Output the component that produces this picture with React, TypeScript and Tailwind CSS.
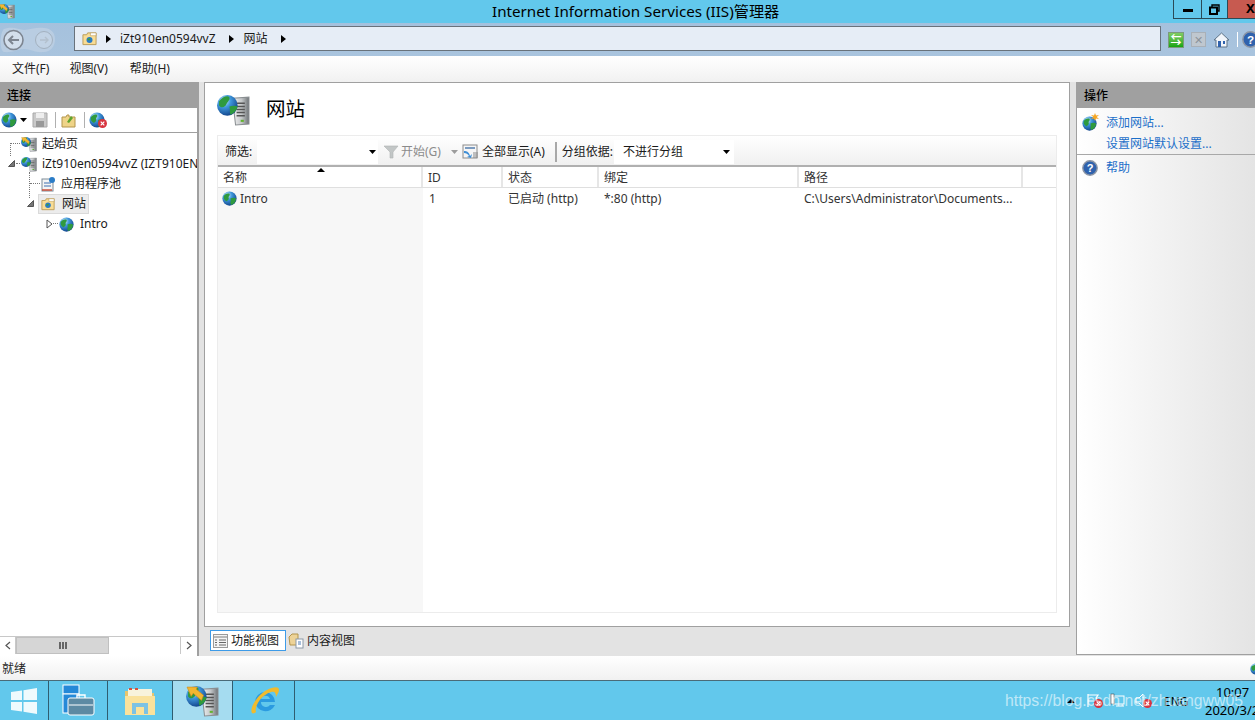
import type { ReactNode } from "react";

const uiFont = { fontFamily: "'Noto Sans', 'Noto Sans CJK SC', sans-serif" };

function Globe({ size = 16 }: { size?: number }) {
  return (
    <svg width={size} height={size} viewBox="0 0 16 16" className="shrink-0">
      <defs>
        <radialGradient id="sea" cx="35%" cy="28%" r="78%">
          <stop offset="0" stopColor="#d8f0fb" />
          <stop offset="0.4" stopColor="#3f97dc" />
          <stop offset="1" stopColor="#0f3f86" />
        </radialGradient>
      </defs>
      <circle cx="8" cy="8" r="7.6" fill="url(#sea)" />
      <path d="M2 5c2-2 4-3 6-2 1 2-1 2-1 4 1 2-1 3-2 4C3 10 1 8 2 5z" fill="#2f9a3e" />
      <path d="M9 8c2-1 4-1 6 0 0 3-2 6-5 7-2-2 0-4-1-7z" fill="#2f9a3e" />
    </svg>
  );
}

function ServerGlobe({ size = 16, badge }: { size?: number; badge?: boolean }) {
  return (
    <svg width={size} height={size} viewBox="0 0 32 32" className="shrink-0">
      <defs>
        <linearGradient id="srv" x1="0" x2="1" y1="0" y2="0">
          <stop offset="0" stopColor="#f4f4f4" />
          <stop offset="0.55" stopColor="#c4c7c9" />
          <stop offset="1" stopColor="#6f7477" />
        </linearGradient>
        <radialGradient id="sea2" cx="35%" cy="28%" r="78%">
          <stop offset="0" stopColor="#d8f0fb" />
          <stop offset="0.4" stopColor="#3f97dc" />
          <stop offset="1" stopColor="#0f3f86" />
        </radialGradient>
      </defs>
      <path d="M15 5l16-1v26l-13 1z" fill="url(#srv)" stroke="#8a8f92" />
      <path d="M19 10h8M19 13h8M19 16h8M19 19h8M19 22h8" stroke="#555" strokeWidth="1.4" />
      <rect x="23" y="26" width="3" height="2" fill="#62b32f" />
      <circle cx="10" cy="12" r="10" fill="url(#sea2)" />
      <path d="M2 8c3-4 8-6 10-4 1 3-2 4-3 7s-5 4-7 1z" fill="#2f9a3e" />
      <path d="M12 13c3-1 6-1 8 0-1 4-4 7-7 8-1-3 0-5-1-8z" fill="#2f9a3e" />
      {badge && <path d="M1 3h10l-1 2 7 6-2 5-8-7-2 3z" fill="#f2b632" stroke="#c98a1c" strokeWidth="0.6" />}
    </svg>
  );
}

function SitesFolder({ size = 16 }: { size?: number }) {
  return (
    <svg width={size} height={size} viewBox="0 0 16 16" className="shrink-0">
      <path d="M1 4h4l1-2h9v12.500H1z" fill="#f8dc95" stroke="#b99a55" />
      <path d="M9 2h6v3H9z" fill="#fff" stroke="#b99a55" strokeWidth="0.6" />
      <circle cx="8" cy="9.500" r="3.200" fill="#2a7cc7" />
      <path d="M6 8.500c1-1 3-1 3 0s-2 2-3 1z" fill="#3f9d3a" />
    </svg>
  );
}

function HelpIcon({ size = 16 }: { size?: number }) {
  return (
    <svg width={size} height={size} viewBox="0 0 16 16" className="shrink-0">
      <circle cx="8" cy="8" r="7.200" fill="#2f62ad" stroke="#8d96a5" strokeWidth="1.400" />
      <text x="8" y="12" textAnchor="middle" fontSize="11" fontWeight="700" fill="#fff" fontFamily="'Liberation Sans', sans-serif">
        ?
      </text>
    </svg>
  );
}

function Filter() {
  return (
    <svg width="16" height="14" viewBox="0 0 16 14" className="shrink-0">
      <path d="M1 1h14L10 7v6H7V7z" fill="#c2c6c6" stroke="#b0b4b4" strokeWidth="0.6" />
    </svg>
  );
}

function RedX({ size = 9 }: { size?: number }) {
  return (
    <svg width={size} height={size} viewBox="0 0 10 10" className="absolute -right-0.5 bottom-0">
      <circle cx="5" cy="5" r="5" fill="#d8343f" />
      <path d="M3 3l4 4M7 3l-4 4" stroke="#fff" strokeWidth="1.300" />
    </svg>
  );
}

function Caret({ grey }: { grey?: boolean }) {
  return (
    <svg width="7" height="4" viewBox="0 0 7 4" className="shrink-0">
      <path d="M0 0h7L3.500 4z" fill={grey ? "#9c9c9c" : "#000"} />
    </svg>
  );
}

function Crumb() {
  return (
    <svg width="5" height="8" viewBox="0 0 5 8" className="shrink-0">
      <path d="M0 0l5 4-5 4z" fill="#000" />
    </svg>
  );
}

function Expanded() {
  return (
    <svg width="7" height="7" viewBox="0 0 7 7">
      <path d="M6.500 0.500v6h-6z" fill="#777" stroke="#555" />
    </svg>
  );
}

function PanelHeader({ children }: { children: ReactNode }) {
  return <div className="h-[26px] shrink-0 bg-[#a0a0a0] flex items-center pl-[7px] pr-2 pt-[2px] text-[12px] font-medium text-black">{children}</div>;
}

function TaskButton({ children, active, width }: { children: ReactNode; active?: boolean; width: string }) {
  return (
    <div className={`${width} h-full flex items-center justify-center border-r border-[#2f5d70] ${active ? "bg-[#a5dcf0]" : ""}`}>
      {children}
    </div>
  );
}

const columns = [
  { label: "名称", cell: "w-[205px]" },
  { label: "ID", cell: "w-[80px]" },
  { label: "状态", cell: "w-[96px]" },
  { label: "绑定", cell: "w-[200px]" },
  { label: "路径", cell: "w-[224px]" },
];

export default function App() {
  return (
    <div className="w-[1255px] h-[720px] overflow-hidden relative flex flex-col bg-[#e3e3e3] text-[12px] text-[#1a1a1a]" style={uiFont}>
      {/* title bar */}
      <div className="h-[23px] shrink-0 bg-[#62c8ec] flex items-start relative">
        <div className="pt-[3px] -ml-[1px]">
          <ServerGlobe size={16} badge />
        </div>
        <div className="absolute left-[492px] top-[1px] text-[15.200px] leading-5 text-black whitespace-nowrap">Internet Information Services (IIS)管理器</div>
        <div className="ml-auto flex h-[19px]">
          <div className="w-[29px] border border-[#2b4a57] border-t-0 flex items-center justify-center">
            <span className="w-[10px] h-[3px] bg-black mt-[3px]" />
          </div>
          <div className="w-[26px] border-b border-r border-[#2b4a57] flex items-center justify-center">
            <svg width="11" height="11" viewBox="0 0 11 11">
              <path d="M3 3V1h7v6H8" fill="none" stroke="#000" strokeWidth="1.400" />
              <rect x="1" y="3.500" width="7" height="6.500" fill="none" stroke="#000" strokeWidth="2" />
            </svg>
          </div>
          <div className="w-[27px] bg-[#c75a50] border-b border-[#2b4a57] text-black text-[13px] font-bold leading-[17px] pl-[18px]">X</div>
        </div>
      </div>

      {/* address bar */}
      <div className="h-[33px] shrink-0 bg-gradient-to-b from-[#a5c1dd] to-[#a9c4de] flex items-center">
        <div className="w-[74px] shrink-0 flex items-center">
          <svg width="58" height="28" viewBox="0 0 58 28">
            <path d="M4 3c8-3 14 0 20 1 6 0 12-3 20-2 6 0 11 4 11 11 0 8-5 13-11 13-8 1-14-3-20-3-6 0-12 4-20 3C-1 25 0 6 4 3z" fill="#b9cde2" />
            <circle cx="13.500" cy="14" r="9.500" fill="#d3dfec" stroke="#7d8590" strokeWidth="1.600" />
            <path d="M19 14H9M13 10l-4 4 4 4" fill="none" stroke="#7d8590" strokeWidth="2" />
            <circle cx="44" cy="14" r="8.500" fill="#c2d3e5" stroke="#a3b1bf" />
            <path d="M40 14h8M45 11l3 3-3 3" fill="none" stroke="#b3c0cd" strokeWidth="1.400" />
          </svg>
        </div>
        <div className="w-[1087px] shrink-0 h-[25px] -mt-[2px] bg-[#e6edf6] border border-[#68727c] flex items-center pl-[7px] text-[12px] text-[#1a1a1a]">
          <SitesFolder size={15} />
          <span className="ml-[9px]">
            <Crumb />
          </span>
          <span className="ml-[9px]">iZt910en0594vvZ</span>
          <span className="ml-[13px]">
            <Crumb />
          </span>
          <span className="ml-[10px]">网站</span>
          <span className="ml-[13px]">
            <Crumb />
          </span>
        </div>
        <div className="flex items-center ml-[7px] gap-[7px] shrink-0">
          <div className="w-[16px] h-[16px] bg-gradient-to-b from-[#7dcd62] to-[#0da50f] border border-[#7c9a7c] flex items-center justify-center text-white text-[11px] leading-none font-bold">⇆</div>
          <div className="w-[15px] h-[15px] bg-[#bfc7cf] border border-[#a8b0b8] flex items-center justify-center text-[#8b939b] text-[11px] leading-none">✕</div>
          <svg width="17" height="16" viewBox="0 0 17 16" className="shrink-0">
            <path d="M8.500 1L1 8h2v7h11V8h2z" fill="#f1f5fa" stroke="#5f7488" />
            <rect x="5" y="9" width="3" height="6" fill="#2f62ad" />
            <rect x="10" y="9" width="2" height="3" fill="#2f62ad" />
          </svg>
          <span className="w-px h-[15px] bg-white" />
          <div className="-ml-[3px]">
            <HelpIcon size={17} />
          </div>
        </div>
      </div>

      {/* menu */}
      <div className="h-[26px] shrink-0 bg-gradient-to-b from-white to-[#f1f1f1] flex items-center pl-[12px] text-[12px] text-[#222]">
        <span>文件(F)</span>
        <span className="ml-[20px]">视图(V)</span>
        <span className="ml-[22px]">帮助(H)</span>
      </div>

      {/* panes */}
      <div className="flex-1 min-h-0 flex bg-[#e3e3e3]">
        {/* connections */}
        <div className="w-[199px] shrink-0 h-full pb-[2px] flex flex-col bg-white border-r-2 border-[#a0a0a0]">
          <PanelHeader>连接</PanelHeader>
          <div className="h-[25px] shrink-0 border-b border-[#a0a0a0] flex items-center pl-[1px]">
            <Globe size={16} />
            <span className="ml-[3px]">
              <Caret />
            </span>
            <svg width="16" height="16" viewBox="0 0 16 16" className="ml-[5px] shrink-0">
              <path d="M1 1h14v14H1z" fill="#c9c9c9" stroke="#a9a9a9" />
              <rect x="4" y="1" width="8" height="5" fill="#eee" />
              <rect x="4" y="9" width="8" height="6" fill="#999" />
            </svg>
            <span className="w-px h-[16px] bg-[#b0b0b0] ml-[7px]" />
            <svg width="15" height="15" viewBox="0 0 15 15" className="ml-[5px] shrink-0">
              <path d="M1 4h4l1-2h2v2h6v10H1z" fill="#efd488" stroke="#b3954d" />
              <path d="M6 9l4-6 2 2-4 5z" fill="#5ea52e" />
            </svg>
            <span className="w-px h-[16px] bg-[#b0b0b0] ml-[8px]" />
            <div className="relative ml-[4px]">
              <Globe size={16} />
              <RedX size={9} />
            </div>
          </div>
          <div className="flex-1 min-h-0 relative overflow-hidden text-[12px]">
            <div className="flex flex-col pt-[1px]">
              <div className="h-[20px] flex items-center pl-[21px] gap-[5px] whitespace-nowrap">
                <ServerGlobe size={16} badge />
                <span>起始页</span>
              </div>
              <div className="h-[20px] flex items-center pl-[21px] gap-[5px] whitespace-nowrap">
                <ServerGlobe size={16} />
                <span>iZt910en0594vvZ (IZT910EN0594VVZ\Administrator)</span>
              </div>
              <div className="h-[20px] flex items-center pl-[40px] gap-[5px] whitespace-nowrap">
                <svg width="16" height="16" viewBox="0 0 16 16" className="shrink-0">
                  <rect x="2" y="3" width="11" height="12" fill="#f4f4f4" stroke="#7d8b98" />
                  <path d="M4 7h7M4 10h7" stroke="#3d6fb0" />
                  <circle cx="12" cy="4" r="3" fill="#2a7cc7" />
                  <path d="M2 14h10" stroke="#c8442f" strokeWidth="1.400" />
                </svg>
                <span>应用程序池</span>
              </div>
              <div className="h-[20px] flex items-center pl-[38px] whitespace-nowrap">
                <div className="h-[20px] w-[51px] bg-[#ececec] border border-[#dadada] flex items-center pl-[2px] gap-[7px]">
                  <SitesFolder size={14} />
                  <span>网站</span>
                </div>
              </div>
              <div className="h-[20px] flex items-center pl-[59px] gap-[6px] whitespace-nowrap">
                <Globe size={15} />
                <span>Intro</span>
              </div>
            </div>
            {/* tree connectors and expanders */}
            <span className="absolute left-[10px] top-[10px] w-[10px] border-t border-dotted border-[#777]" />
            <span className="absolute left-[10px] top-[10px] h-[13px] border-l border-dotted border-[#777]" />
            <span className="absolute left-[8px] top-[27px]">
              <Expanded />
            </span>
            <span className="absolute left-[16px] top-[30px] w-[4px] border-t border-dotted border-[#777]" />
            <span className="absolute left-[29px] top-[39px] h-[26px] border-l border-dotted border-[#777]" />
            <span className="absolute left-[30px] top-[50px] w-[10px] border-t border-dotted border-[#777]" />
            <span className="absolute left-[27px] top-[67px]">
              <Expanded />
            </span>
            <span className="absolute left-[46px] top-[86px]">
              <svg width="7" height="10" viewBox="0 0 7 10">
                <path d="M1 1l5 4-5 4z" fill="#fff" stroke="#555" />
              </svg>
            </span>
            <span className="absolute left-[53px] top-[90px] w-[5px] border-t border-dotted border-[#777]" />
          </div>
          <div className="h-[18px] shrink-0 flex border-t border-[#c8c8c8] bg-white">
            <div className="w-[16px] flex items-center justify-center text-[#555] border-r border-[#c8c8c8]">
              <svg width="6" height="9" viewBox="0 0 6 9">
                <path d="M5 1L1 4.500 5 8" fill="none" stroke="#555" strokeWidth="1.200" />
              </svg>
            </div>
            <div className="w-[93px] bg-[#d6d6d6] border border-[#c0c0c0] flex items-center justify-center gap-[1px]">
              <span className="w-[2px] h-[7px] bg-[#666]" />
              <span className="w-[2px] h-[7px] bg-[#666]" />
              <span className="w-[2px] h-[7px] bg-[#666]" />
            </div>
            <div className="flex-1 border-r border-[#c8c8c8]" />
            <div className="w-[16px] flex items-center justify-center">
              <svg width="6" height="9" viewBox="0 0 6 9">
                <path d="M1 1l4 3.500L1 8" fill="none" stroke="#555" strokeWidth="1.200" />
              </svg>
            </div>
          </div>
        </div>

        {/* center */}
        <div className="flex-1 min-w-0 flex flex-col pl-[5px] pr-[6px]">
          <div className="h-[545px] shrink-0 bg-white border border-[#a0a0a0] pl-[12px] pr-[12px] flex flex-col">
            <div className="h-[52px] shrink-0 flex items-center gap-[16px]">
              <ServerGlobe size={33} />
              <span className="text-[19.500px] leading-none text-black">网站</span>
            </div>
            <div className="flex-1 min-h-0 mb-[13px] flex flex-col border border-[#ececec]">
              <div className="h-[31px] shrink-0 bg-gradient-to-b from-white to-[#f0f0f0] border-b-2 border-[#b0b0b0] flex items-center pl-[7px] pt-[2px]">
                <span className="w-[32px]">筛选:</span>
                <div className="w-[121px] h-[24px] bg-white flex items-center justify-end pr-[2px]">
                  <Caret />
                </div>
                <span className="ml-[5px]">
                  <Filter />
                </span>
                <span className="ml-[2px] text-[#8b8b8b]">开始(G)</span>
                <span className="ml-[10px]">
                  <Caret grey />
                </span>
                <svg width="18" height="16" viewBox="0 0 18 16" className="ml-[4px] shrink-0">
                  <rect x="1" y="1" width="14" height="13" fill="#f6f6f6" stroke="#8c8c8c" />
                  <path d="M3 4h10" stroke="#7b9bc0" strokeWidth="2" />
                  <path d="M2 7c3 0 5 1 6 5l2-2-1 4-4-1 2-1c-1-2-3-3-5-3z" fill="#3f8fd6" />
                  <path d="M11 9h5M11 11h5M11 13h5" stroke="#888" />
                </svg>
                <span className="ml-[2px]">全部显示(A)</span>
                <span className="w-[2px] h-[20px] bg-[#a8a8a8] ml-[10px]" />
                <span className="ml-[5px]">分组依据:</span>
                <div className="w-[120px] h-[24px] bg-white flex items-center pl-[9px] ml-[1px] pr-[4px] justify-between">
                  <span>不进行分组</span>
                  <Caret />
                </div>
              </div>
              <div className="h-[21px] shrink-0 flex border-b border-[#dfdfdf] bg-white relative">
                {columns.map((col) => (
                  <div key={col.label} className={`${col.cell} border-r-2 border-[#e6e6e6] flex items-center pl-[5px] pt-[1px] text-[#333]`}>
                    {col.label}
                  </div>
                ))}
                <span className="absolute left-[99px] top-[1px] w-0 h-0 border-x-[4px] border-x-transparent border-b-[4px] border-b-black" />
              </div>
              <div className="flex-1 min-h-0 flex">
                <div className="w-[205px] shrink-0 bg-[#f7f7f7]">
                  <div className="h-[21px] flex items-center pl-[4px] gap-[3px] text-[#333]">
                    <Globe size={15} />
                    <span>Intro</span>
                  </div>
                </div>
                <div className="flex-1 min-w-0 bg-white">
                  <div className="h-[21px] flex items-center text-[#333]">
                    <span className="w-[80px] pl-[6px]">1</span>
                    <span className="w-[96px] pl-[5px]">已启动 (http)</span>
                    <span className="w-[200px] pl-[5px]">*:80 (http)</span>
                    <span className="pl-[5px] whitespace-nowrap">C:\Users\Administrator\Documents...</span>
                  </div>
                </div>
              </div>
            </div>
          </div>
          <div className="h-[28px] shrink-0 flex items-center pl-[6px]">
            <div className="h-[21px] w-[76px] mt-[-1px] bg-white border border-[#3d9be8] flex items-center pl-[2px] gap-[3px]">
              <svg width="15" height="14" viewBox="0 0 15 14" className="shrink-0">
                <rect x="0.500" y="0.500" width="14" height="13" fill="#f4f4f4" stroke="#9a9a9a" />
                <path d="M1 3h13" stroke="#b8b8b8" strokeWidth="2" />
                <path d="M6 6h7M6 8.500h7M6 11h7M2 6h2M2 8.500h2M2 11h2" stroke="#666" />
              </svg>
              <span className="whitespace-nowrap">功能视图</span>
            </div>
            <div className="mt-[-1px] ml-[2px] flex items-center gap-[3px] whitespace-nowrap">
              <svg width="16" height="16" viewBox="0 0 16 16" className="shrink-0">
                <path d="M1 4l3-3h6v11H2z" fill="#edd398" stroke="#b3954d" />
                <rect x="8" y="6" width="7" height="9" fill="#fff" stroke="#8c9aa8" />
                <path d="M10 9h3M10 11h3" stroke="#4f7fb8" />
              </svg>
              <span>内容视图</span>
            </div>
          </div>
        </div>

        {/* actions */}
        <div className="w-[179px] shrink-0 h-full pb-[1px]">
          <div className="h-full bg-gradient-to-r from-white to-[#e4e4e4] border-l border-b border-[#a0a0a0] flex flex-col">
            <PanelHeader>操作</PanelHeader>
            <div className="flex flex-col text-[#1c6fc9]">
              <div className="h-[28px] flex items-center pl-[5px] gap-[9px] pt-[2px]">
                <div className="relative">
                  <Globe size={15} />
                  <svg width="8" height="8" viewBox="0 0 8 8" className="absolute -right-[2px] -top-[3px]">
                    <path d="M4 0l1 2.500L8 2 5.700 4 8 6 5 5.500 4 8 3 5.500 0 6l2.300-2L0 2l3 .500z" fill="#f6a623" />
                  </svg>
                </div>
                <span>添加网站...</span>
              </div>
              <div className="h-[19px] flex items-center pl-[29px] border-b border-[#a8a8a8] pb-[3px]">设置网站默认设置...</div>
              <div className="h-[26px] flex items-center pl-[5px] gap-[8px]">
                <HelpIcon size={16} />
                <span>帮助</span>
              </div>
            </div>
          </div>
        </div>
      </div>

      {/* status bar */}
      <div className="h-[24px] shrink-0 bg-gradient-to-b from-white to-[#f1f1f1] flex items-center pl-[2px] pt-[2px] justify-between text-[12px] text-[#222]">
        <span>就绪</span>
        <div className="-mr-[7px]">
          <Globe size={12} />
        </div>
      </div>

      {/* taskbar */}
      <div className="h-[40px] shrink-0 bg-[#62c8ec] border-t border-[#4a6b78] flex items-center relative">
        <TaskButton width="w-[49px]">
          <svg width="28" height="28" viewBox="0 0 28 28">
            <path d="M1 5l11-1.600V13H1zM13.500 3.200L27 1v12H13.500zM1 15h11v9.600L1 23zM13.500 15H27v12l-13.500-2.200z" fill="#fff" fillOpacity="0.9" />
          </svg>
        </TaskButton>
        <TaskButton width="w-[59px]">
          <svg width="34" height="34" viewBox="0 0 34 34">
            <rect x="2" y="1" width="16" height="9" fill="#2589d8" stroke="#fff" />
            <rect x="2" y="10" width="16" height="19" fill="#2589d8" stroke="#fff" />
            <path d="M16 14v-3h8v3" fill="none" stroke="#fff" strokeWidth="1.400" />
            <rect x="7" y="14" width="26" height="17" rx="2" fill="#5d8aa3" stroke="#fff" />
            <path d="M8 21h24" stroke="#fff" />
          </svg>
        </TaskButton>
        <TaskButton width="w-[65px]">
          <svg width="32" height="30" viewBox="0 0 32 30">
            <path d="M1 5h12l2 2h15v22H1z" fill="#e7c56e" />
            <rect x="4" y="3" width="24" height="8" fill="#f8f3dc" />
            <path d="M5 2h3v2H5zM11 2h3v2h-3z" fill="#d8503a" />
            <path d="M1 10h30v19H1z" fill="#fae29c" />
            <path d="M8 28V17h16v11h-4v-7h-8v7z" fill="#7cc2e4" />
          </svg>
        </TaskButton>
        <TaskButton width="w-[60px]" active>
          <ServerGlobe size={33} badge />
        </TaskButton>
        <span className="w-[2px]" />
        <TaskButton width="w-[60px]">
          <svg width="32" height="32" viewBox="0 0 32 32">
            <path d="M6 17a10 10 0 0 1 20 0H12a5 5 0 0 0 9 3h5a10.500 10.500 0 0 1-20-3zm6-3h9a4.700 4.700 0 0 0-9 0z" fill="#2b9be0" />
            <path d="M3 28C0 24 8 10 18 5c6-3 12-4 12 0 0 2-2 5-3 7 0-4-1-6-5-5C12 10 5 22 7 27c-1 1-3 2-4 1z" fill="#f0bb2d" />
          </svg>
        </TaskButton>

        <div className="ml-auto relative h-full w-[190px] shrink-0">
          <span className="absolute left-[2px] top-[18px] w-0 h-0 border-x-[4px] border-x-transparent border-b-[4px] border-b-black" />
          <div className="absolute left-[22px] top-[12px] w-[14px] h-[15px]">
            <svg width="14" height="15" viewBox="0 0 14 15">
              <path d="M1 1v13M1 2h10l-2 3 2 3H1" fill="none" stroke="#fff" strokeWidth="1.200" />
            </svg>
            <RedX size={9} />
          </div>
          <div className="absolute left-[45px] top-[12px] w-[15px] h-[15px]">
            <svg width="15" height="15" viewBox="0 0 15 15">
              <rect x="4" y="3" width="10" height="8" fill="none" stroke="#fff" />
              <rect x="1" y="1" width="3" height="10" fill="#fff" stroke="#333" strokeWidth="0.5" />
              <path d="M6 13h8" stroke="#fff" />
            </svg>
          </div>
          <div className="absolute left-[70px] top-[12px] w-[15px] h-[15px]">
            <svg width="15" height="15" viewBox="0 0 15 15">
              <path d="M1 5h3l4-4v13L4 10H1z" fill="none" stroke="#fff" />
            </svg>
            <RedX size={9} />
          </div>
          <span className="absolute left-[99px] top-[13px] text-[12px] leading-4 text-black">ENG</span>
          <span className="absolute left-[151px] top-[3px] text-[13px] leading-4 text-black">10:07</span>
          <span className="absolute left-[140px] top-[21px] text-[13px] leading-4 text-black whitespace-nowrap">2020/3/2</span>
        </div>
      </div>

      {/* watermark */}
      <div className="absolute left-[1005px] top-[691px] text-[15.800px] leading-5 text-white/60 whitespace-nowrap" style={{ fontFamily: "'Liberation Sans', sans-serif" }}>
        https://blog.csdn.net/zhuangww05
      </div>
    </div>
  );
}
